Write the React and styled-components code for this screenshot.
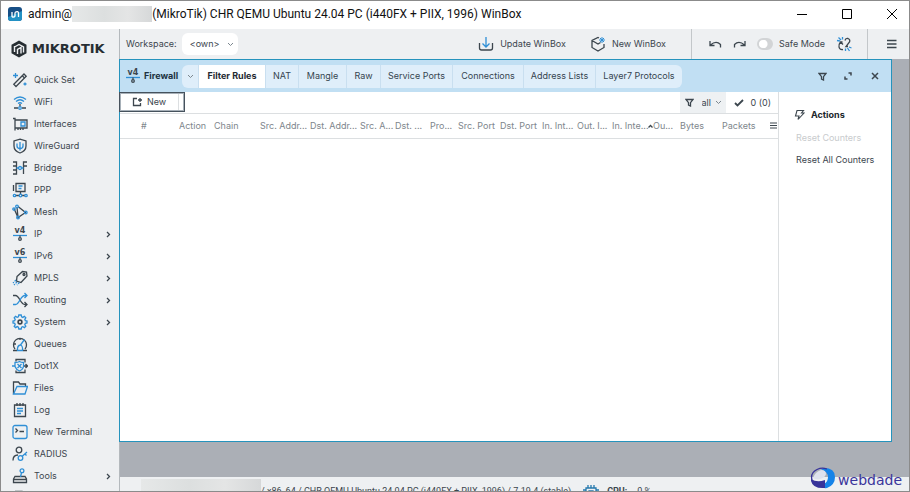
import React, {useState} from 'react';
import styled, {createGlobalStyle} from 'styled-components';

const ink = '#3c464e';
const blue = '#2f8fd6';
const line = '#dcdfe1';
const accent = '#2593bd';

const GlobalStyle = createGlobalStyle`
  * {
    box-sizing: border-box;
  }
  body {
    margin: 0;
    background: #eef0f2;
    color: ${ink};
    font-family: Inter, 'Liberation Sans', sans-serif;
    font-size: 9px;
    line-height: 14px;
  }
  button, select, input {
    font: inherit;
    color: inherit;
    border: 0;
    padding: 0;
    margin: 0;
    background: none;
  }
`;

const Frame = styled.div`
  height: 100vh;
  display: flex;
  flex-direction: column;
  border: 1px solid #8b8b8b;
  overflow: hidden;
`;

const TitleBar = styled.header`
  display: flex;
  align-items: center;
  flex: none;
  height: 28px;
  padding: 0 11px 2px 7px;
  background: #fff;
  color: #111;
  font-family: Roboto, 'Noto Sans', sans-serif;
  font-size: 12px;
  white-space: nowrap;
`;

const TitleText = styled.span`
  margin-left: ${p => p.$gap || 0}px;
`;

const Redacted = styled.span`
  width: ${p => p.$width}px;
  height: 16px;
  flex: none;
  background: linear-gradient(90deg, #e6e8e8, #dcdfdf 40%, #e4e5e5 70%, #d6d8d9);
`;

const WindowControls = styled.div`
  display: flex;
  gap: 33px;
  margin-left: auto;
`;

const IconButton = styled.button`
  display: flex;
  align-items: center;
  justify-content: center;
  flex: none;
`;

const Body = styled.div`
  display: flex;
  flex: 1;
  min-height: 0;
`;

const Sidebar = styled.nav`
  display: flex;
  flex-direction: column;
  flex: none;
  width: 119px;
  padding-top: 10px;
  border-right: 1px solid #b4b9bd;
  overflow: hidden;
`;

const Brand = styled.div`
  display: flex;
  align-items: center;
  gap: 5px;
  flex: none;
  height: 20px;
  margin-bottom: 10px;
  padding-left: 10px;
  color: #272e33;
  font-family: 'DejaVu Sans', sans-serif;
  font-size: 13px;
  font-weight: bold;
  text-transform: uppercase;
`;

const NavItem = styled.a`
  display: flex;
  align-items: center;
  gap: 6px;
  flex: none;
  height: 22px;
  padding: 0 8px 0 11px;
  color: inherit;
  text-decoration: none;

  svg:last-child:not(:first-child) {
    margin-left: auto;
  }
`;

const Main = styled.main`
  display: flex;
  flex-direction: column;
  flex: 1;
  min-width: 0;
`;

const TopBar = styled.div`
  display: flex;
  align-items: stretch;
  flex: none;
  height: 30px;
  white-space: nowrap;
`;

const TopGroup = styled.div`
  display: flex;
  align-items: center;
  gap: ${p => p.$gap || 0}px;
  padding: ${p => p.$pad || '0'};
  margin-left: ${p => (p.$end ? 'auto' : '0')};
  border-left: ${p => (p.$divided ? '1px solid #c3c7ca' : '0')};
`;

const TextButton = styled.button`
  display: flex;
  align-items: center;
  gap: 6px;
`;

const Picker = styled.span`
  display: inline-grid;
  align-items: center;
  width: ${p => p.$width}px;
  height: 22px;
  border-radius: ${p => (p.$round ? 6 : 0)}px;
  background: ${p => (p.$round ? '#fff' : 'none')};

  select, svg {
    grid-area: 1 / 1;
  }
  select {
    appearance: none;
    height: 22px;
    padding-left: ${p => (p.$round ? 8 : 0)}px;
    outline: 0;
  }
  svg {
    justify-self: end;
    margin-right: 4px;
    pointer-events: none;
  }
`;

const SwitchLabel = styled.label`
  display: flex;
  align-items: center;
  gap: 6px;
`;

const Switch = styled.input`
  appearance: none;
  width: 16px;
  height: 12px;
  border: 2px solid #d2d4d6 !important;
  border-radius: 6px;
  background: radial-gradient(circle at 4px 4px, #fff 4px, #d2d4d6 5px) !important;

  &:checked {
    background: ${blue} !important;
  }
`;

const Desktop = styled.div`
  display: flex;
  flex: 1;
  min-height: 0;
  padding: 0 17px 35px 0;
  background: #abafb6;
`;

const Panel = styled.section`
  display: flex;
  flex-direction: column;
  flex: 1;
  min-width: 0;
  margin-left: -1px;
  border: 1px solid ${accent};
  background: #fff;
`;

const PanelHead = styled.div`
  display: flex;
  align-items: center;
  flex: none;
  height: 32px;
  padding: 0 10px 0 5px;
  background: #c1dff3;
`;

const PanelTitle = styled.h1`
  display: flex;
  align-items: center;
  gap: 3px;
  width: 57px;
  margin: 0;
  font-size: 9px;
  line-height: 14px;
  color: #20323f;
`;

const Tabs = styled.div`
  display: flex;
  height: 23px;
  border-radius: 6px;
  overflow: hidden;
  background: #dfeefa;
`;

const Tab = styled.button`
  width: ${p => p.$width}px;
  white-space: nowrap;
  border-right: 1px solid #c9dff0;
  background: ${p => (p.$active ? '#fff' : 'none')};
  color: ${p => (p.$active ? '#1f2a32' : '#35444f')};
  font-weight: ${p => (p.$active ? 700 : 400)};

  &:last-child {
    border-right: 0;
  }
`;

const PanelButtons = styled.div`
  display: flex;
  gap: 15px;
  margin-left: auto;
`;

const PanelBody = styled.div`
  display: flex;
  flex: 1;
  min-height: 0;
`;

const Rules = styled.div`
  flex: 1;
  min-width: 0;
`;

const Toolbar = styled.div`
  display: flex;
  justify-content: space-between;
  height: 22px;
  border-bottom: 1px solid ${line};
`;

const NewButton = styled.button`
  display: flex;
  align-items: center;
  gap: 5px;
  width: 66px;
  height: 20px;
  margin-left: -1px;
  padding-left: 12px;
  border: 1px solid #46525d;
  outline: 1px solid #a7b0b8;
  outline-offset: -2px;

  &::after {
    content: '';
    height: 18px;
    margin-left: 7px;
    border-left: 1px solid ${line};
  }
`;

const FilterBox = styled.div`
  display: flex;
  align-items: center;
  gap: 8px;
  width: 46px;
  padding-left: 5px;
  background: #eef1f3;
`;

const ToolbarEnd = styled.div`
  display: flex;
`;

const Count = styled.span`
  display: flex;
  align-items: center;
  gap: 7px;
  padding: 0 7px 0 8px;
`;

const Grid = styled.table`
  width: 100%;
  table-layout: fixed;
  border-collapse: collapse;

  th {
    height: 24px;
    padding: 0;
    border-bottom: 1px solid ${line};
    color: #7e868c;
    font-weight: 400;
    text-align: left;
    white-space: nowrap;
  }
  th:first-child {
    padding-left: 21px;
  }
`;

const Actions = styled.aside`
  display: flex;
  flex-direction: column;
  align-items: flex-start;
  gap: 8px;
  flex: none;
  width: 113px;
  padding: 16px 0 0 14px;
  border-left: 1px solid ${line};

  h2 {
    display: flex;
    align-items: center;
    gap: 6px;
    margin: 0 0 1px;
    font-size: 9px;
    line-height: 14px;
    color: #20262b;
  }
`;

const ActionButton = styled.button`
  padding-left: 3px;
  white-space: nowrap;

  &:disabled {
    color: #c8cbcd;
  }
`;

const StatusBar = styled.footer`
  display: flex;
  align-items: flex-start;
  flex: none;
  height: 14px;
  padding: 2px 0 0 21px;
  overflow: hidden;
  font-family: Roboto, 'Liberation Sans', sans-serif;
  white-space: nowrap;
`;

const StatusText = styled.span`
  margin: 5px 0 0 ${p => p.$gap || 0}px;
  font-weight: ${p => (p.$bold ? 700 : 400)};
`;

const Watermark = styled.div`
  position: absolute;
  right: 8px;
  bottom: 3px;
  display: flex;
  align-items: flex-end;
  gap: 2px;
  color: #3a359b;
  font-family: 'DejaVu Sans', sans-serif;
  font-size: 14px;
  line-height: 18px;
`;

const Svg = ({w = 16, h = w, box = `0 0 ${w} ${h}`, children}) => (
  <svg width={w} height={h} viewBox={box} fill="none" stroke={ink} strokeWidth="1.3" aria-hidden="true">
    {children}
  </svg>
);

const Version = ({n}) => (
  <Svg>
    <text x="8" y="7" textAnchor="middle" fontFamily="DejaVu Sans" fontWeight="bold" fontSize="8" fill={ink} stroke="none">{`v${n}`}</text>
    <path d="M1 9.5h14" stroke={blue} />
    <path d="M8 9.5v2" />
    <circle cx="8" cy="13" r="1.3" />
  </Svg>
);

const icons = {
  quick: <Svg><path d="M1.800 12.300 12 2l2.200 2.200L4 14.500z" /><path d="m10.300 3.800 2.200 2.200" /><path d="M3.500 1v5M1 3.500h5M13 10.500v3M11.500 12h3" stroke={blue} /></Svg>,
  wifi: <Svg><path d="M2 5.500q6-5 12 0M4 7.500q4-3.500 8 0M6 9.500q2-1.500 4 0" stroke={blue} /><path d="M8 10v2.500M2 14h4M10 14h4" /><circle cx="8" cy="14" r="1.300" stroke={blue} /></Svg>,
  nic: <Svg><path d="M1 2.500h2v12M3 4h12v8H3M6 12v2M8.500 12v2M11 12v2" /><path d="M9 6h4v4H9z" stroke={blue} /></Svg>,
  guard: <Svg><path d="M8 1.200 14 3v5q0 5-6 7-6-2-6-7V3z" /><path d="M8 4v8.500M5 5.500V8q0 2.500 3 2.500T11 8V5.500" stroke={blue} /></Svg>,
  bridge: <Svg><path d="M1 2h3.500v12H1M1 6h3.500M1 10h3.500M15 2h-3.500v12M11.500 6H15M11.500 14V10" /><path d="M4.500 8h2M9.500 8h2" stroke={blue} /><circle cx="8" cy="8" r="1.500" stroke={blue} /></Svg>,
  ppp: <Svg><path d="M4 1.500h9v8H4zM1.500 3v6M8.500 9.500v3M4 13.500h3M10 13.500h3" /><path d="M6.500 4h4M6.500 6.500h3" stroke={blue} /><circle cx="2.500" cy="13.500" r="1.200" stroke={blue} /><circle cx="8.500" cy="13.500" r="1.300" stroke={blue} /><circle cx="14" cy="13.500" r="1.200" stroke={blue} /></Svg>,
  mesh: <Svg><path d="M6 2.500 13.500 8.500 6 13.500 5 3M2 4.500l4 9" /><circle cx="5" cy="2.500" r="1.300" stroke={blue} /><circle cx="2" cy="5" r="1.200" stroke={blue} /><circle cx="13.800" cy="8.500" r="1.300" stroke={blue} /><circle cx="6" cy="13.500" r="1.300" stroke={blue} /></Svg>,
  v4: <Version n="4" />,
  v6: <Version n="6" />,
  mpls: <Svg><path d="M5 6.500 10.500 1.500l4 .5.500 4-6 6.500L4.500 11z" /><circle cx="12" cy="4.500" r="1" /><path d="M4 10 1 13M5 12l-3 3M7.500 12.500 5 15" stroke={blue} strokeDasharray="2 1" /></Svg>,
  routing: <Svg><path d="M1 3.500h2.500q2 0 4.500 4.500t5 4.500H15M12.500 10l2.500 2.500-2.500 2.500" /><path d="M1 12.500h2.500q2 0 4.500-4.500t5-4.500H15M12.500 1 15 3.500 12.500 6" stroke={blue} /></Svg>,
  system: <Svg><path d="m6.800 1-.4 1.900-1.200.5-1.700-1-1.300 1.400 1 1.600-.5 1.200L1 7v2l1.700.4.5 1.200-1 1.700 1.400 1.300 1.600-1 1.200.5.400 1.900h2.400l.4-1.900 1.200-.5 1.700 1 1.300-1.400-1-1.600.5-1.200L15 9V7l-1.700-.4-.5-1.200 1-1.600-1.400-1.400-1.600 1-1.200-.5L9.200 1z" stroke={blue} /><circle cx="8" cy="8" r="1.900" strokeWidth="1.600" /></Svg>,
  queues: <Svg><path d="M3 13A6.500 6.500 0 1 1 13 13M1 14.500h4M11 14.500h4M8 2v2M2 8h2" /><path d="m12.500 3.500-4 5.500M5.500 14.500q-.5-5 3-5.500 2.500 1 2 5.500z" stroke={blue} /></Svg>,
  dot1x: <Svg><path d="M4 3.500V1.500h9v3M13 11.500v3H4v-2M12 8h3.500M13.500 6l2 2-2 2" /><path d="M0 8h3M3 4.500q3 0 4.500-1 1.500 1 4 1v4q-.5 3-4 4.500Q4 11.500 3 8.500zM5.500 6l4 4M9.500 6l-4 4" stroke={blue} /></Svg>,
  files: <Svg><path d="M1.500 14V2h5l1.500 2h5.500v2.500" /><path d="M1.500 14 5 6.500h10.500L13 14z" stroke={blue} /></Svg>,
  log: <Svg><path d="M2.500 3h11v11.500h-11zM5 1v3M8 1v3M11 1v3" /><path d="M5 6.500h6M5 9h6M5 11.500h4" stroke={blue} /></Svg>,
  terminal: <Svg><rect x="1" y="1.500" width="14" height="13" rx="2" stroke={blue} /><path d="m3.500 4.500 2 2-2 2M7.500 7.500H12" /></Svg>,
  radius: <Svg><circle cx="7" cy="4" r="2.800" /><path d="M1 14.500q0-5.500 5-5.500" /><circle cx="8.500" cy="12" r="2.300" stroke={blue} /><path d="m10 10.500 5-4.500M13 8l1.500 1.500" stroke={blue} /></Svg>,
  tools: <Svg><path d="M1.500 11 3 8.500h10l1.500 2.500v3.500h-13zM1.500 11.500h13" /><circle cx="10" cy="2.800" r="1.900" stroke={blue} /><path d="M9.500 4.500 8.500 9" stroke={blue} /></Svg>,
  more: <Svg><path d="M3 1.500h7v4" /></Svg>,
};

const Chevron = () => (
  <Svg w={7} h={5}><path d="M1 1l2.500 2.500L6 1" stroke="#7c878f" strokeWidth="1" /></Svg>
);

const Funnel = () => (
  <Svg w={9}><path d="M1 1.500h7L5.500 4.700V8L3.500 7V4.700z" /></Svg>
);

const menu = [
  ['Quick Set', 'quick'], ['WiFi', 'wifi'], ['Interfaces', 'nic'], ['WireGuard', 'guard'],
  ['Bridge', 'bridge'], ['PPP', 'ppp'], ['Mesh', 'mesh'], ['IP', 'v4', true], ['IPv6', 'v6', true],
  ['MPLS', 'mpls', true], ['Routing', 'routing', true], ['System', 'system', true],
  ['Queues', 'queues'], ['Dot1X', 'dot1x'], ['Files', 'files'], ['Log', 'log'],
  ['New Terminal', 'terminal'], ['RADIUS', 'radius'], ['Tools', 'tools', true], ['', 'more'],
];

const tabs = [
  ['Filter Rules', 67], ['NAT', 33], ['Mangle', 48], ['Raw', 34], ['Service Ports', 72],
  ['Connections', 71], ['Address Lists', 72], ['Layer7 Protocols', 86],
];

const columns = [
  ['#', 59], ['Action', 35], ['Chain', 46], ['Src. Addr...', 50], ['Dst. Addr...', 50],
  ['Src. A...', 35], ['Dst. ...', 35], ['Pro...', 28], ['Src. Port', 42], ['Dst. Port', 42],
  ['In. Int...', 35], ['Out. I...', 35], ['In. Inte...', 41], ['Ou...', 27], ['Bytes', 42],
  ['Packets', 48],
];

const App = () => {
  const [tab, setTab] = useState('Filter Rules');
  const [safe, setSafe] = useState(false);

  return (
    <Frame>
      <GlobalStyle />
      <TitleBar>
        <Svg w={14}>
          <rect width="14" height="14" rx="3" fill="#174f86" stroke="none" />
          <path d="M0 10 14 4v7q0 3-3 3H3q-3 0-3-3z" fill="#2391c4" stroke="none" />
          <path d="M4 5v4.500q1.500 1.500 3-.5V5.500M7 5.500q3-2 3.500.5v4" stroke="#fff" />
        </Svg>
        <TitleText $gap={6}>admin@</TitleText>
        <Redacted $width={80} />
        <TitleText>(MikroTik) CHR QEMU Ubuntu 24.04 PC (i440FX + PIIX, 1996) WinBox</TitleText>
        <WindowControls>
          <IconButton aria-label="Minimize"><Svg w={12}><path d="M1 6.500h10" stroke="#000" strokeWidth="1" /></Svg></IconButton>
          <IconButton aria-label="Maximize"><Svg w={12}><path d="M1.500 1.500h9v9h-9z" stroke="#000" strokeWidth="1" /></Svg></IconButton>
          <IconButton aria-label="Close"><Svg w={12}><path d="m1 1 10 10M11 1 1 11" stroke="#000" strokeWidth="1" /></Svg></IconButton>
        </WindowControls>
      </TitleBar>
      <Body>
        <Sidebar>
          <Brand>
            <Svg w={16} h={18}>
              <path d="M8 .5 15.500 4.800v8.400L8 17.500.5 13.200V4.800z" fill="#272e33" stroke="none" />
              <path d="M3.500 6v6M3.500 7 8 4.500l4.500 2.500v5.500M6.500 14V9.500L10 7.500v6" stroke="#eef0f2" strokeWidth="1.400" />
            </Svg>
            mikrotik
          </Brand>
          {menu.map(([label, icon, sub]) => (
            <NavItem href="#" key={icon} aria-label={label || 'More'}>
              {icons[icon]}
              {label}
              {sub && <Svg w={5} h={7}><path d="m1 1 2.500 2.500L1 6" /></Svg>}
            </NavItem>
          ))}
        </Sidebar>
        <Main>
          <TopBar>
            <TopGroup $gap={5} $pad="0 0 0 6px">
              <label htmlFor="workspace">Workspace:</label>
              <Picker $width={56} $round>
                <select id="workspace"><option>&lt;own&gt;</option></select>
                <Chevron />
              </Picker>
            </TopGroup>
            <TopGroup $end $gap={25} $pad="0 25px 0 0">
              <TextButton>
                <Svg w={16}><path d="M1.500 7v5q0 2 2 2h9q2 0 2-2V7" /><path d="M8 1v10M4.500 7.500 8 11l3.500-3.500" stroke={blue} /></Svg>
                Update WinBox
              </TextButton>
              <TextButton>
                <Svg w={15} h={16}><path d="M8 2 7 1.500 1 4.500v7L7 15l6-3.500V8M1 4.500l6 3.500 2.500-1.500" /><path d="M11 1v6M8 4h6M9 2l4 4M13 2 9 6" stroke={blue} strokeWidth="1" /></Svg>
                New WinBox
              </TextButton>
            </TopGroup>
            <TopGroup $divided $gap={11} $pad="0 15px 0 17px">
              <IconButton aria-label="Undo"><Svg w={13} h={9}><path d="M1 1v4.500h4.500M1.500 5Q7 0 11.500 4.500v3" /></Svg></IconButton>
              <IconButton aria-label="Redo"><Svg w={13} h={9}><path d="M12 1v4.500H7.500M11.500 5Q6 0 1.500 4.500v3" /></Svg></IconButton>
              <SwitchLabel>
                <Switch type="checkbox" checked={safe} onChange={() => setSafe(!safe)} />
                Safe Mode
              </SwitchLabel>
              <IconButton aria-label="Connection">
                <Svg w={16}><path d="M6.500 6H4.500Q2.500 8.500 3 11q.5 3 4 2.500M4.500 6 7 8.500M9 4.500Q9.500 2 12 2.500q2.500 1 1.500 3.500L10 10.500h2" /><path d="M1 4.500l3 .5M2.500 1.500l2.500 2.500M6.500 1v2.500M9.500 12.500V15M11.500 12l2 3M13 11l2.500 1" stroke={blue} /></Svg>
              </IconButton>
            </TopGroup>
            <TopGroup $divided $pad="0 12px 0 18px">
              <IconButton aria-label="Menu"><Svg w={11} h={10}><path d="M1 1.500h9.500M1 5h9.500M1 8.500h9.500" /></Svg></IconButton>
            </TopGroup>
          </TopBar>
          <Desktop>
            <Panel>
              <PanelHead>
                <PanelTitle>{icons.v4}Firewall</PanelTitle>
                <Tabs role="tablist">
                  <Tab $width={17} aria-label="Firewall views"><Chevron /></Tab>
                  {tabs.map(([name, width]) => (
                    <Tab key={name} role="tab" $width={width} $active={tab === name} aria-selected={tab === name} onClick={() => setTab(name)}>
                      {name}
                    </Tab>
                  ))}
                </Tabs>
                <PanelButtons>
                  <IconButton aria-label="Filter"><Funnel /></IconButton>
                  <IconButton aria-label="Restore"><Svg w={12}><path d="M6.500 3H9V5.500M3 6.500V9h2.500" strokeWidth="1.500" /></Svg></IconButton>
                  <IconButton aria-label="Close Firewall"><Svg w={12}><path d="m3 3 6 6M9 3 3 9" strokeWidth="1.500" /></Svg></IconButton>
                </PanelButtons>
              </PanelHead>
              <PanelBody>
                <Rules>
                  <Toolbar>
                    <NewButton>
                      <Svg w={10}><path d="M5 1.500H1.500v7h7V6M8 1v4M6 3h4" /></Svg>
                      New
                    </NewButton>
                    <ToolbarEnd>
                      <FilterBox>
                        <Funnel />
                        <Picker $width={24}>
                          <select aria-label="Filter by chain"><option>all</option></select>
                          <Chevron />
                        </Picker>
                      </FilterBox>
                      <Count>
                        <Svg w={10} h={8}><path d="m1 4 2.500 2.500L9 1" strokeWidth="1.800" /></Svg>
                        0 (0)
                      </Count>
                    </ToolbarEnd>
                  </Toolbar>
                  <Grid>
                    <colgroup>
                      {columns.map(([name, width]) => <col key={name} width={width} />)}
                      <col />
                    </colgroup>
                    <thead>
                      <tr>
                        {columns.map(([name]) => (
                          <th key={name} scope="col">
                            {name}
                            {name === 'In. Inte...' && <Svg w={5} h={5}><path d="M.5 3.500l2-2 2 2" /></Svg>}
                          </th>
                        ))}
                        <th scope="col" aria-label="Columns"><Svg w={7} h={7}><path d="M0 1h7M0 3.500h7M0 6h7" strokeWidth="1" /></Svg></th>
                      </tr>
                    </thead>
                  </Grid>
                </Rules>
                <Actions>
                  <h2>
                    <Svg w={12}><path d="M4 1.500h6.500L8.500 4H11L5 10.500 6 7H2.500z" strokeWidth="1.100" /></Svg>
                    Actions
                  </h2>
                  <ActionButton disabled>Reset Counters</ActionButton>
                  <ActionButton>Reset All Counters</ActionButton>
                </Actions>
              </PanelBody>
            </Panel>
          </Desktop>
          <StatusBar>
            <Redacted $width={120} />
            <StatusText>/ x86_64 / CHR QEMU Ubuntu 24.04 PC (i440FX + PIIX, 1996) / 7.19.4 (stable)</StatusText>
            <StatusText $gap={12}><Svg w={16}><path d="M3 4h10v10H3zM6 7h4v4H6zM5 1v3M8 1v3M11 1v3M0 6h3M13 6h3M0 9h3M13 9h3" stroke="#2478ad" /></Svg></StatusText>
            <StatusText $gap={8} $bold>CPU:</StatusText>
            <StatusText $gap={10}>0 %</StatusText>
          </StatusBar>
        </Main>
      </Body>
      <Watermark>
        <Svg w={26} h={22}>
          <path d="M14 1q11 0 11 9 0 8-8 11-5 1-3-4 4-2 4-7t-7-8z" fill="#1683e8" stroke="none" />
          <path d="M1 12q6 4 14 1v8Q3 22 1 14z" fill="#38339a" stroke="none" />
          <path d="M2 13Q0 6 7 2.500 12 0 17 2" stroke="#38339a" />
          <path d="M3 11q2-6 8-8 5 0 5 4-1 4-6 5-4 1-7-1z" fill="#dfe2ee" stroke="none" />
        </Svg>
        webdade
      </Watermark>
    </Frame>
  );
};

export default App;
